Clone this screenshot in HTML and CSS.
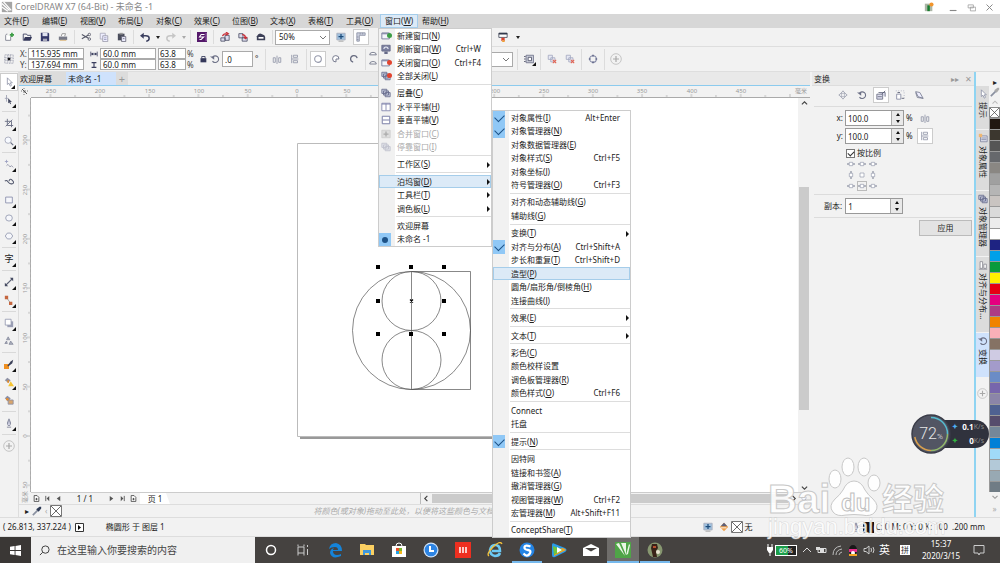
FILE: index.html
```html
<!DOCTYPE html>
<html lang="zh-CN">
<head>
<meta charset="utf-8">
<title>CorelDRAW X7 (64-Bit) - 未命名 -1</title>
<link rel="stylesheet" href="styles.css">
</head>
<body>
<svg class="defs" width="0" height="0" aria-hidden="true">
  <symbol id="new" viewBox="0 0 12 12"><path d="M2 4v6h6V5M4 2.500H3L2 4" fill="#fff" stroke="#777a88"/><path d="M7 3.500h5M9.500 1v5" stroke="#3c9d45" stroke-width="2"/></symbol>
  <symbol id="open" viewBox="0 0 12 12"><path d="M1.500 10V2.500h4l1 1.500h4v2" fill="none" stroke="#34385a"/><path d="M1.500 10.500 3.500 6H12l-2 4.500z" fill="#34385a"/></symbol>
  <symbol id="save" viewBox="0 0 12 12"><path d="M1 1h9l1 1v9H1z" fill="#34386a"/><path d="M3 1h6v4H3z" fill="#dfe2f0"/><path d="M3.500 8h5v3h-5z" fill="#aab"/></symbol>
  <symbol id="print" viewBox="0 0 12 12"><path d="M4 5l1-3h4L8 5" fill="#fff" stroke="#888"/><path d="M1 5.500h10v4H1z" fill="#777a88"/><path d="M2 10h8" stroke="#d8b070"/></symbol>
  <symbol id="cut" viewBox="0 0 12 12"><path d="M1 3l8 4.500M1 8l8-4.500" stroke="#555868" stroke-width="1.300"/><circle cx="10" cy="3" r="1.500" fill="none" stroke="#555868"/><circle cx="10" cy="8.500" r="1.500" fill="none" stroke="#555868"/></symbol>
  <symbol id="copy" viewBox="0 0 12 12"><path d="M1.500 1.500h6v7h-6z" fill="#eef" stroke="#aab"/><path d="M4.500 4.500h6v7h-6z" fill="#eef" stroke="#99a"/><path d="M6 7h3M6 9h3" stroke="#99b"/></symbol>
  <symbol id="paste" viewBox="0 0 12 12"><path d="M1 2h8v8H1z" fill="#4a4d5c"/><path d="M3 1h4v2H3z" fill="#999"/><path d="M5.500 5.500h5v6h-5z" fill="#eef" stroke="#667"/><path d="M7 8h2" stroke="#667"/></symbol>
  <symbol id="undo" viewBox="0 0 12 12"><path d="M3 4.500h4q4 0 4 3T7.500 11" fill="none" stroke="#3b3f5f" stroke-width="1.800"/><path d="M0 4.500 4.500 1v7z" fill="#3b3f5f"/></symbol>
  <symbol id="redo" viewBox="0 0 12 12"><path d="M9 4.500H5q-4 0-4 3T4.500 11" fill="none" stroke="#c6c6c6" stroke-width="1.800"/><path d="M12 4.500 7.500 1v7z" fill="#c6c6c6"/></symbol>
  <symbol id="launch" viewBox="0 0 12 12"><path d="M0 0h12v12H0z" fill="#54186a"/><path d="M9 3H5L3 6h5L5 9H3" fill="none" stroke="#fff" stroke-width="1.300"/><path d="M11 1v10" stroke="#b58cc4"/></symbol>
  <symbol id="import" viewBox="0 0 12 12"><path d="M1 7h5v4H1zM6 4h5v6H6z" fill="#dde" stroke="#4d5068"/><path d="M3 5q1-3 5-3M7 0l3 2-3 2" fill="none" stroke="#c9303a" stroke-width="1.500"/></symbol>
  <symbol id="export" viewBox="0 0 12 12"><path d="M5 7h6v4H5zM1 2h5v5H1z" fill="#dde" stroke="#4d5068"/><path d="M5 3q4 0 4 4M7 6l2 2 2-2" fill="none" stroke="#c9303a" stroke-width="1.500"/></symbol>
  <symbol id="pdf" viewBox="0 0 12 12"><path d="M1 5q2-4 5-3l4 2 1 2v4H1z" fill="#3d4058"/><path d="M3 6h6v2H3z" fill="#fff"/></symbol>
  <symbol id="screen" viewBox="0 0 12 12"><path d="M1 1.500h10v8H1z" fill="#9fc0de" stroke="#a9adbc"/><path d="M6 2.500v6M3 5.500h6" stroke="#1c4b7a" stroke-width="1.500"/><path d="M3 11h6" stroke="#999"/></symbol>
  <symbol id="refresh" viewBox="0 0 12 12"><path d="M1 1.500h10v7H1z" fill="#7c80a0" stroke="#666a88"/><path d="M3.500 6a2.500 2.500 0 1 1 5 0M2.500 10.500h7" fill="none" stroke="#e8eaf4" stroke-width="1.300"/><path d="M4 9h4v3H4z" fill="#666a88"/></symbol>
  <symbol id="rulers" viewBox="0 0 12 12"><path d="M1 11V1h10v3H4v7z" fill="#ccd1df" stroke="#8b90a3"/><path d="M5 1v2M8 1v2M1 6h2M1 9h2" stroke="#8b90a3"/></symbol>
  <symbol id="appmenu" viewBox="0 0 12 12"><path d="M1 1.500h10v5H1z" fill="#fff" stroke="#444a5c"/><path d="M1 1h10v2H1z" fill="#333a4c"/><path d="M4 7h4v4L6 10l-2 1z" fill="#d8432e"/><path d="M5 10h3v2H5z" fill="#f0a030"/></symbol>
  <symbol id="origin" viewBox="0 0 12 12"><path d="M1 1h10v10H1zM1 4.500h10M1 7.500h10M4.500 1v10M7.500 1v10" fill="none" stroke="#7e8298" stroke-dasharray="1 1"/><path d="M4.500 4.500h3v3h-3z" fill="#111"/></symbol>
  <symbol id="lock" viewBox="0 0 12 12"><path d="M3 5h7v5H3z" fill="#34385a"/><path d="M4.500 5V3h4v2" fill="none" stroke="#34385a"/></symbol>
  <symbol id="rotate" viewBox="0 0 12 12"><path d="M3 4a4 4 0 1 1 0 4.500" fill="none" stroke="#6c7086" stroke-width="1.300"/><path d="M0 3h5v4z" fill="#6c7086"/></symbol>
  <symbol id="mirh" viewBox="0 0 12 12"><path d="M1.500 4.500H4V10H1.500zM8 4.500h2.500V10H8zM6 2v10" fill="none" stroke="#9296a8"/></symbol>
  <symbol id="mirv" viewBox="0 0 12 12"><path d="M4 1.500h5V4H4zM4 8h5v2.500H4zM2 6h8M2 1v10" fill="none" stroke="#9296a8"/></symbol>
  <symbol id="circle" viewBox="0 0 12 12"><circle cx="6" cy="6" r="4" fill="#fff" stroke="#9498aa" stroke-width="1.300"/></symbol>
  <symbol id="pie" viewBox="0 0 12 12"><path d="M6 6v3.500A3.800 3.800 0 1 1 9.500 6z" fill="#fff" stroke="#787c90" stroke-width="1.200"/></symbol>
  <symbol id="arc" viewBox="0 0 12 12"><path d="M5 9.800A4 4 0 1 1 9.800 5" fill="none" stroke="#686c80" stroke-width="1.500"/></symbol>
  <symbol id="wrap" viewBox="0 0 12 12"><path d="M2.500 1.500h9v9h-9z" fill="#c9ccd8" stroke="#6d7088"/><path d="M5 4h4v4H5z" fill="#fff" stroke="#4d5068"/><path d="M0 3h2M0 6h2M0 9h2" stroke="#4d5068"/></symbol>
  <symbol id="layer" viewBox="0 0 12 12"><path d="M1.500 1.500h5v5h-5zM4.500 4.500h5v5h-5z" fill="#e6e8f3" stroke="#a5a9c0"/><path d="m7 7 4 4M11 7l-4 4" stroke="#e4614f" stroke-width="1.300"/></symbol>
  <symbol id="curve" viewBox="0 0 12 12"><circle cx="6" cy="6" r="4" fill="none" stroke="#868ba8" stroke-width="1.300"/><path d="M5 1h2v2H5zM5 9h2v2H5zM1 5h2v2H1zM9 5h2v2H9z" fill="#666b8c"/></symbol>
  <symbol id="plus" viewBox="0 0 12 12"><circle cx="6" cy="6" r="5.300" fill="none" stroke="#b9b9b9" stroke-width=".8"/><path d="M6 3v6M3 6h6" stroke="#a9a9a9" stroke-width="1.200"/></symbol>
  <symbol id="pick" viewBox="0 0 12 12"><path d="M4 1v8l2-1.500L7.500 11 9 10 7.500 7H10z" fill="#fff" stroke="#858aa0" stroke-width=".9"/></symbol>
  <symbol id="shape" viewBox="0 0 12 12"><path d="M3 0v8M1 4h4" stroke="#9a9eb0"/><path d="M5 4v6l1.500-1 1 2 1-.5-1-2h2z" fill="#454a62"/></symbol>
  <symbol id="crop" viewBox="0 0 12 12"><path d="M4 1v8h7M1 4h8v7M2 10 10 2" fill="none" stroke="#6a6f84" stroke-width="1.100"/></symbol>
  <symbol id="zoomt" viewBox="0 0 12 12"><circle cx="5" cy="5" r="3.800" fill="#f7faff" stroke="#a0a4b6"/><path d="m8 8 3 3" stroke="#6a6f84" stroke-width="1.500"/></symbol>
  <symbol id="free" viewBox="0 0 12 12"><path d="M1 3h4M3 1v4" stroke="#9a9fc0"/><path d="M3 8q2-3 3 0t3 0l2 2" fill="none" stroke="#8a8ea4"/></symbol>
  <symbol id="art" viewBox="0 0 12 12"><path d="M1 5q2-2 4 1t5 2 0-4-4 1" fill="none" stroke="#565b70" stroke-width="1.300"/></symbol>
  <symbol id="rect" viewBox="0 0 12 12"><path d="M2 2.500h8v7H2z" fill="#f6f7fb" stroke="#858aa8"/></symbol>
  <symbol id="ellipse" viewBox="0 0 12 12"><ellipse cx="6" cy="6" rx="4" ry="3.700" fill="#f6f7fb" stroke="#9297ae"/></symbol>
  <symbol id="poly" viewBox="0 0 12 12"><path d="m4 2.500h4L10.500 6 8 9.500H4L1.500 6z" fill="#f6f7fb" stroke="#9297ae"/></symbol>
  <symbol id="dim" viewBox="0 0 12 12"><path d="m2.500 9.500 7-7" stroke="#565b70" stroke-width="1.500"/><path d="M1 7l4 4H1zM11 5 7 1h4z" fill="#464b62"/></symbol>
  <symbol id="conn" viewBox="0 0 12 12"><path d="m3 3 5 7" fill="none" stroke="#999"/><path d="M1 1h4v4H1zM6 8h4v4H6z" fill="#c4663f"/></symbol>
  <symbol id="shadow" viewBox="0 0 12 12"><path d="M4 4h7v7H4z" fill="#9a9eb4"/><path d="M1.500 1.500h7v7h-7z" fill="#fff" stroke="#9297ae"/></symbol>
  <symbol id="transp" viewBox="0 0 12 12"><path d="m5 1 2 3.500H3zM3 6l1 3H1zM8 6l3 4H6z" fill="#a9adbc" stroke="#7c8094" stroke-width=".8"/></symbol>
  <symbol id="dropper" viewBox="0 0 12 12"><path d="M0 6h6v6H0z" fill="#f09020"/><path d="m4 8 4-5 3-2-1 4-5 4z" fill="#3b4058"/></symbol>
  <symbol id="eyedrop" viewBox="0 0 12 12"><path d="m1 11 6-6" stroke="#8a90a0" stroke-width="2"/><path d="m5 4 3 3 3-4 0-2H9z" fill="currentColor"/></symbol>
  <symbol id="fill" viewBox="0 0 12 12"><path d="m4 1 4 3-3 3-4-3z" fill="#8d91a4"/><path d="M4 4h2v3H4z" fill="#e88c28"/><path d="m8 5 4 6H5z" fill="#f5c330"/></symbol>
  <symbol id="bucket" viewBox="0 0 12 12"><path d="m6 1 5 5-5 5-5-5z" fill="#f0a04a"/><path d="m6 1 4 4H2z" fill="#5b607c"/><path d="M2 7h7" stroke="#fff"/></symbol>
  <symbol id="smart" viewBox="0 0 12 12"><path d="m4 1 4 3-3 4-4-4z" fill="#8a8ea4"/><path d="M5 6h6v5H5z" fill="#d9a56b" stroke="#8a8ea4"/><circle cx="4" cy="5" r="1.500" fill="#e88c28"/></symbol>
  <symbol id="props" viewBox="0 0 12 12"><path d="M3 3.500h8v7H3z" fill="#dfe2ee" stroke="#8287a0"/><path d="M4 6h6M4 8h6" stroke="#8287a0"/><path d="M1 1h4v4H1z" fill="#efb873"/></symbol>
  <symbol id="align" viewBox="0 0 12 12"><path d="M1 11h10M2.500 2h3v8h-3zM7 5h3v5H7z" fill="#fff" stroke="#8a8a94"/></symbol>
  <symbol id="pen" viewBox="0 0 12 12"><path d="M6 1 4 6l1 3h2l1-3zM3.500 11h5M6 3v4" fill="#eef" stroke="#777c92"/></symbol>
  <symbol id="win" viewBox="0 0 12 12"><path d="M1 2.500h9v7H1z" fill="#f3f4fb" stroke="#6c7090"/><path d="M1 2h9v2H1z" fill="#8c90ac"/></symbol>
  <symbol id="stack" viewBox="0 0 12 12"><path d="M1 1.500h6v5H1zM3 3.500h6v5H3zM5 5.500h6v5H5z" fill="#c8cce0" stroke="#656a8a"/></symbol>
  <symbol id="tileh" viewBox="0 0 12 12"><path d="M1 1.500h10v9H1zM6 2v8" fill="#fff" stroke="#7c80a8"/><path d="M1 2.500h10" stroke="#7c80a8"/></symbol>
  <symbol id="tilev" viewBox="0 0 12 12"><path d="M1.500 1.500h9v9h-9zM2 6h8" fill="#fff" stroke="#7c80a8" stroke-width="1.200"/></symbol>
  <symbol id="merge" viewBox="0 0 12 12"><path d="M1 1.500h10v9H1z" fill="#ddd" stroke="#ccc"/><path d="M6 3v6M3 6h6" stroke="#aaa" stroke-width="1.500"/></symbol>
  <symbol id="move" viewBox="0 0 12 12"><path d="M6 1 8 3.500H7V5h1.500V4L11 6 8.500 8V7H7v1.500h1L6 11 4 8.500h1V7H3.500v1L1 6l2.500-2v1H5V3.500H4z" fill="#fff" stroke="#85899c" stroke-width=".8"/></symbol>
  <symbol id="scale" viewBox="0 0 12 12"><path d="M1 5h7v6H1zM3 3h8v5M2 8h5" fill="#dde" stroke="#666b80"/><path d="m7 5 4-4" stroke="#555a70"/></symbol>
  <symbol id="size" viewBox="0 0 12 12"><path d="M2 5h5v6H2z" fill="#fff" stroke="#8287a0"/><path d="M1 1h10v10" fill="none" stroke="#a0a4b8" stroke-dasharray="1 2"/><path d="M8 10h3M3 3h3" stroke="#555a70"/></symbol>
  <symbol id="skew" viewBox="0 0 12 12"><path d="m2 2 5 1 4 7-6-2z" fill="#eef" stroke="#777c90"/><path d="m2 3 2 6 7 1" fill="none" stroke="#777c90"/></symbol>
  <symbol id="anchor" viewBox="0 0 12 12"><path d="M3.500 3.500h5v5h-5z" fill="#fff" stroke="#9397aa"/><path d="M0 6h3M9 6h3" stroke="#777c90" stroke-width="1.500"/></symbol>
  <symbol id="anchorv" viewBox="0 0 12 12"><path d="M3.500 3.500h5v5h-5z" fill="#fff" stroke="#9397aa"/><path d="M6 0v3M6 9v3" stroke="#777c90" stroke-width="1.500"/></symbol>
  <symbol id="anchorc" viewBox="0 0 12 12"><path d="M3 3h6v6H3z" fill="#fff" stroke="#9397aa"/></symbol>
  <symbol id="nocolor" viewBox="0 0 12 12"><path d="M.5.500h11v11H.5z" fill="#fff" stroke="#777"/><path d="m1 1 10 10M11 1 1 11" stroke="#444" stroke-width=".8"/></symbol>
  <symbol id="page" viewBox="0 0 12 12"><path d="M2 1h5l3 3v7H2z" fill="#fff" stroke="#333" stroke-width="1.300"/><path d="M4 7h4M6 5v4" stroke="#333" stroke-width="1.300"/></symbol>
</svg>

<div class="app">
  <header class="titlebar">
    <svg class="logo" viewBox="0 0 14 14"><path d="M1 1h12v12H1z" fill="#a5a5a5"/><path d="m1 3 9 8M1 7l7 5M3 1l9 10" stroke="#fff" stroke-width="1.500"/></svg>
    <h1>CorelDRAW X7 (64-Bit) - 未命名 -1</h1>
    <svg class="user" viewBox="0 0 12 12"><path d="M1 2h9v9H1z" fill="#aab5a5"/><path d="M4 4h3v7H4z" fill="#187c2e"/><circle cx="9" cy="3" r="2.500" fill="#f2952c"/></svg>
    <button class="winbtn" aria-label="最小化"><svg viewBox="0 0 12 12"><path d="M1 10h9" stroke="#888" stroke-width="1.500"/></svg></button>
    <button class="winbtn" aria-label="还原"><svg viewBox="0 0 12 12"><path d="M1.500 2.500h7v4h-7zM4.500 5.500h7v5h-7z" fill="#fff" stroke="#999"/></svg></button>
    <button class="winbtn" aria-label="关闭"><svg viewBox="0 0 12 12"><path d="m2 2 8 8M10 2l-8 8" stroke="#888" stroke-width="1.300"/></svg></button>
  </header>

  <nav class="menubar">
    <button>文件(<u>F</u>)</button><button>编辑(<u>E</u>)</button><button>视图(<u>V</u>)</button><button>布局(<u>L</u>)</button><button>对象(<u>C</u>)</button><button>效果(<u>C</u>)</button><button>位图(<u>B</u>)</button><button>文本(<u>X</u>)</button><button>表格(<u>T</u>)</button><button>工具(<u>O</u>)</button><button class="open">窗口(<u>W</u>)</button><button>帮助(<u>H</u>)</button>
  </nav>

  <div class="toolbar">
    <button class="tb" aria-label="新建"><svg><use href="#new"/></svg></button>
    <button class="tb" aria-label="打开"><svg><use href="#open"/></svg></button>
    <button class="tb" aria-label="保存"><svg><use href="#save"/></svg></button>
    <button class="tb" aria-label="打印"><svg><use href="#print"/></svg></button>
    <i class="sep"></i>
    <button class="tb" aria-label="剪切"><svg><use href="#cut"/></svg></button>
    <button class="tb" aria-label="复制"><svg><use href="#copy"/></svg></button>
    <button class="tb" aria-label="粘贴"><svg><use href="#paste"/></svg></button>
    <i class="sep"></i>
    <button class="tb" aria-label="撤消"><svg><use href="#undo"/></svg></button>
    <button class="drop" aria-label="撤消列表"></button>
    <button class="tb" aria-label="重做"><svg><use href="#redo"/></svg></button>
    <button class="drop dim" aria-label="重做列表"></button>
    <i class="sep"></i>
    <button class="tb" aria-label="搜索内容"><svg><use href="#launch"/></svg></button>
    <i class="sep"></i>
    <button class="tb" aria-label="导入"><svg><use href="#import"/></svg></button>
    <button class="tb" aria-label="导出"><svg><use href="#export"/></svg></button>
    <button class="tb" aria-label="发布为 PDF"><svg><use href="#pdf"/></svg></button>
    <i class="sep"></i>
    <select class="zoom" aria-label="缩放级别"><option>50%</option></select>
    <button class="tb wide" aria-label="全屏预览"><svg><use href="#screen"/></svg></button>
    <button class="tb on" aria-label="显示标尺"><svg><use href="#rulers"/></svg></button>
    <span class="covered"></span>
    <i class="sep"></i>
    <button class="tb wide" aria-label="应用程序启动器"><svg><use href="#appmenu"/></svg></button>
    <button class="drop" aria-label="启动器列表"></button>
  </div>

  <div class="propbar">
    <button class="tb" aria-label="对象原点"><svg><use href="#origin"/></svg></button>
    <div class="pair">
      <label for="px">X:</label><input id="px" value="115.935 mm">
      <label for="py">Y:</label><input id="py" value="137.694 mm">
    </div>
    <div class="pair size">
      <label for="pw"><svg viewBox="0 0 10 8"><path d="M1 1v6M9 1v6M2 4h6" stroke="#3b3f5f"/><path d="M1 4l3-2v4zM9 4 6 2v4z" fill="#3b3f5f"/></svg></label><input id="pw" aria-label="宽度" value="60.0 mm">
      <label for="ph"><svg viewBox="0 0 10 8"><path d="M2 1h6M2 7h6M5 1v6" stroke="#3b3f5f" stroke-width="1.400"/></svg></label><input id="ph" aria-label="高度" value="60.0 mm">
    </div>
    <div class="pair pct">
      <input id="sx" aria-label="水平缩放" value="63.8"><label for="sx">%</label>
      <input id="sy" aria-label="垂直缩放" value="63.8"><label for="sy">%</label>
    </div>
    <button class="tb narrow" aria-label="锁定比率"><svg><use href="#lock"/></svg></button>
    <svg><use href="#rotate"/></svg>
    <input class="angle" aria-label="旋转角度" value=".0"><span>°</span>
    <i class="sep"></i>
    <button class="tb" aria-label="水平镜像"><svg><use href="#mirh"/></svg></button>
    <button class="tb" aria-label="垂直镜像"><svg><use href="#mirv"/></svg></button>
    <i class="sep"></i>
    <button class="tb on" aria-label="椭圆形"><svg><use href="#circle"/></svg></button>
    <button class="tb" aria-label="饼图"><svg><use href="#pie"/></svg></button>
    <button class="tb" aria-label="弧"><svg><use href="#arc"/></svg></button>
    <i class="sep"></i>
    <svg class="arcs" viewBox="0 0 12 22"><path d="M2 6a4 3 0 0 1 8 0zM2 17a4 3 0 0 1 8 0z" fill="#fff" stroke="#686c80"/></svg>
    <select class="outline" aria-label="轮廓宽度"><option></option></select>
    <i class="sep"></i>
    <button class="tb fly" aria-label="文本换行"><svg><use href="#wrap"/></svg></button>
    <i class="sep"></i>
    <button class="tb" aria-label="到图层前面"><svg><use href="#layer"/></svg></button>
    <button class="tb" aria-label="到图层后面"><svg><use href="#layer"/></svg></button>
    <i class="sep"></i>
    <button class="tb" aria-label="转换为曲线"><svg><use href="#curve"/></svg></button>
    <i class="sep"></i>
    <button class="tb big" aria-label="快速自定义"><svg><use href="#plus"/></svg></button>
  </div>

  <main class="work">
    <aside class="toolbox">
      <button class="fly sel" aria-label="选择"><svg><use href="#pick"/></svg></button>
      <button class="fly" aria-label="形状"><svg><use href="#shape"/></svg></button>
      <hr>
      <button class="fly" aria-label="裁剪"><svg><use href="#crop"/></svg></button>
      <button class="fly" aria-label="缩放"><svg><use href="#zoomt"/></svg></button>
      <hr>
      <button class="fly" aria-label="手绘"><svg><use href="#free"/></svg></button>
      <button aria-label="艺术笔"><svg><use href="#art"/></svg></button>
      <button class="fly" aria-label="矩形"><svg><use href="#rect"/></svg></button>
      <button class="fly" aria-label="椭圆形"><svg><use href="#ellipse"/></svg></button>
      <button class="fly" aria-label="多边形"><svg><use href="#poly"/></svg></button>
      <hr>
      <button class="fly">字</button>
      <hr>
      <button class="fly" aria-label="平行度量"><svg><use href="#dim"/></svg></button>
      <button class="fly" aria-label="连接器"><svg><use href="#conn"/></svg></button>
      <hr>
      <button class="fly" aria-label="阴影"><svg><use href="#shadow"/></svg></button>
      <button aria-label="透明度"><svg><use href="#transp"/></svg></button>
      <hr>
      <button class="fly" aria-label="颜色滴管"><svg><use href="#dropper"/></svg></button>
      <button class="fly" aria-label="交互式填充"><svg><use href="#fill"/></svg></button>
      <button aria-label="智能填充"><svg><use href="#smart"/></svg></button>
      <hr>
      <button class="fly" aria-label="轮廓笔"><svg><use href="#pen"/></svg></button>
      <hr>
      <button class="big" aria-label="快速自定义"><svg><use href="#plus"/></svg></button>
    </aside>

    <section class="doc">
      <div class="tabs">
        <button>欢迎屏幕</button><button class="current">未命名 -1</button><button class="add">+</button>
      </div>
      <div class="view">
        <svg class="corner" viewBox="0 0 12 12"><path d="M5 2v8M2 5h8" stroke="#777" stroke-dasharray="1 1"/><path d="m3 3 5 5" stroke="#555"/></svg>
        <svg class="ruler top">
          <defs><pattern id="th" width="49.300" height="12" patternUnits="userSpaceOnUse" x="266"><path d="M0 8v4M4.900 11v1M9.900 11v1M14.800 11v1M19.700 11v1M24.600 9v3M29.600 11v1M34.500 11v1M39.400 11v1M44.400 11v1M49.300 8v4" stroke="#bbb"/></pattern></defs>
          <rect width="100%" height="12" fill="url(#th)"/>
          <g class="nums"><text x="20" y="7">250</text><text x="69" y="7">200</text><text x="119" y="7">150</text><text x="168" y="7">100</text><text x="217" y="7">50</text><text x="266" y="7">0</text><text x="316" y="7">50</text><text x="365" y="7">100</text><text x="414" y="7">150</text><text x="464" y="7">200</text><text x="513" y="7">250</text><text x="562" y="7">300</text><text x="611" y="7">350</text><text x="661" y="7">400</text><text x="710" y="7">450</text><text x="770" y="7">毫米</text></g>
        </svg>
        <svg class="ruler left">
          <defs><pattern id="tv" width="12" height="49.300" patternUnits="userSpaceOnUse" y="338"><path d="M8 0h4M11 4.900h1M11 9.900h1M11 14.800h1M11 19.700h1M9 24.600h3M11 29.600h1M11 34.500h1M11 39.400h1M11 44.400h1M8 49.300h4" stroke="#bbb"/></pattern></defs>
          <rect width="12" height="100%" fill="url(#tv)"/>
          <g class="nums"><text transform="translate(8 42) rotate(-90)">300</text><text transform="translate(8 92) rotate(-90)">250</text><text transform="translate(8 141) rotate(-90)">200</text><text transform="translate(8 190) rotate(-90)">150</text><text transform="translate(8 240) rotate(-90)">100</text><text transform="translate(8 289) rotate(-90)">50</text><text transform="translate(8 338) rotate(-90)">0</text><text transform="translate(8 387) rotate(-90)">50</text><text transform="translate(8 399) rotate(-90)">毫米</text></g>
        </svg>
        <svg class="canvas" role="img" aria-label="绘图页面">
          <g transform="translate(266 338)" fill="none">
            <path d="M3 1.500h207V-289" stroke="#999" stroke-width="3"/>
            <path d="M.5-292.500h207V.500H.5z" fill="#fff" stroke="#bbb"/>
            <g stroke="#555" stroke-width=".7">
              <circle cx="114.500" cy="-105.500" r="59"/>
              <circle cx="114.500" cy="-135" r="29.500"/>
              <circle cx="114.500" cy="-76" r="29.500"/>
              <path d="M114.500-164.500h59v118h-59z"/>
            </g>
            <path d="M79-171h4v4h-4zM112-171h4v4h-4zM145-171h4v4h-4zM79-137h4v4h-4zM145-137h4v4h-4zM79-104h4v4h-4zM112-104h4v4h-4zM145-104h4v4h-4z" fill="#000"/>
            <path d="m113-136.500 3 3M116-136.500l-3 3" stroke="#000" stroke-width="1.200"/>
          </g>
        </svg>
        <div class="vscroll"><button aria-label="向上"><svg viewBox="0 0 8 8"><path d="m1 5 3-3 3 3" fill="none" stroke="#444" stroke-width="1.300"/></svg></button><i></i><button aria-label="向下"><svg viewBox="0 0 8 8"><path d="m1 3 3 3 3-3" fill="none" stroke="#444" stroke-width="1.300"/></svg></button></div>
      </div>
      <div class="pages">
        <button class="pg" aria-label="添加页面"><svg><use href="#page"/></svg></button>
        <button class="pg" aria-label="第一页"><svg viewBox="0 0 8 8"><path d="M2 1v6" stroke="#555"/><path d="M6 1v6L3 4z" fill="#555"/></svg></button>
        <button class="pg" aria-label="上一页"><svg viewBox="0 0 8 8"><path d="M6 1v6L2 4z" fill="#555"/></svg></button>
        <span class="count">1 / 1</span>
        <button class="pg" aria-label="下一页"><svg viewBox="0 0 8 8"><path d="M2 1v6l4-3z" fill="#555"/></svg></button>
        <button class="pg" aria-label="最后一页"><svg viewBox="0 0 8 8"><path d="M6 1v6" stroke="#555"/><path d="M2 1v6l3-3z" fill="#555"/></svg></button>
        <button class="pg" aria-label="在后面添加页面"><svg><use href="#page"/></svg></button>
        <button class="pagetab">页 1</button>
        <div class="hscroll"><button aria-label="向左"><svg viewBox="0 0 8 8"><path d="M5 1 2 4l3 3" fill="none" stroke="#444" stroke-width="1.300"/></svg></button><i></i><button aria-label="向右"><svg viewBox="0 0 8 8"><path d="m3 1 3 3-3 3" fill="none" stroke="#444" stroke-width="1.300"/></svg></button><button aria-label="导航器"><svg><use href="#zoomt"/></svg></button></div>
      </div>
      <div class="docpal">
        <span>▸</span><svg><use href="#eyedrop"/></svg><span class="faint">‹</span><svg><use href="#nocolor"/></svg>
        <em>将颜色(或对象)拖动至此处，以便将这些颜色与文档存储在一起</em>
      </div>
    </section>

    <section class="docker">
      <header><h2>变换</h2><span>▸▸</span><span>✕</span></header>
      <div class="modes">
        <button class="tb" aria-label="位置"><svg><use href="#move"/></svg></button>
        <button class="tb" aria-label="旋转"><svg><use href="#rotate"/></svg></button>
        <button class="tb on" aria-label="缩放和镜像"><svg><use href="#scale"/></svg></button>
        <button class="tb" aria-label="大小"><svg><use href="#size"/></svg></button>
        <button class="tb" aria-label="倾斜"><svg><use href="#skew"/></svg></button>
      </div>
      <div class="fields">
        <label for="tx">x:</label><span class="spin"><input id="tx" value="100.0"><b></b><b></b></span><span>%</span><button class="tb" aria-label="水平镜像"><svg><use href="#mirh"/></svg></button>
        <label for="ty">y:</label><span class="spin"><input id="ty" value="100.0"><b></b><b></b></span><span>%</span><button class="tb on" aria-label="垂直镜像"><svg><use href="#mirv"/></svg></button>
      </div>
      <label class="check"><input type="checkbox" checked>按比例</label>
      <div class="anchors">
        <svg><use href="#anchor"/></svg><svg><use href="#anchor"/></svg><svg><use href="#anchor"/></svg>
        <svg><use href="#anchorv"/></svg><svg><use href="#anchorc"/></svg><svg><use href="#anchorv"/></svg>
        <svg><use href="#anchor"/></svg><svg class="picked"><use href="#anchor"/></svg><svg><use href="#anchor"/></svg>
      </div>
      <div class="copies"><label for="cp">副本:</label><span class="spin"><input id="cp" value="1"><b></b><b></b></span></div>
      <button class="apply">应用</button>
    </section>

    <nav class="strip">
      <button><svg><use href="#pick"/></svg>提示</button>
      <button><svg><use href="#props"/></svg>对象属性</button>
      <button><svg><use href="#stack"/></svg>对象管理器</button>
      <button><svg><use href="#align"/></svg>对齐与分布...</button>
      <button class="current"><svg><use href="#rotate"/></svg>变换</button>
      <svg class="more"><use href="#plus"/></svg>
    </nav>

    <aside class="palette">
      <span>▸</span><svg class="faint"><use href="#eyedrop"/></svg>
      <svg class="faint" viewBox="0 0 12 12"><path d="m3 8 3-3 3 3" fill="none" stroke="#bbb" stroke-width="1.300"/></svg>
      <svg class="none"><use href="#nocolor"/></svg>
      <div class="swatches" id="swatches"></div>
      <svg class="chev" viewBox="0 0 12 12"><path d="m3 4 3 3 3-3" fill="none" stroke="#999" stroke-width="1.300"/></svg>
      <span class="faint">»</span>
    </aside>
  </main>

  <footer class="status">
    <span class="pos">( 26.813, 337.224 )</span>
    <svg class="play" viewBox="0 0 9 9"><path d="M.5.500h8v8h-8z" fill="#fff" stroke="#333"/><path d="M3 2v5l3-2.500z"/></svg>
    <span class="obj">椭圆形 于 图层 1</span>
    <span class="marks"><svg><use href="#screen"/></svg><svg><use href="#bucket"/></svg><svg class="nofill"><use href="#nocolor"/></svg>无</span>
    <span class="pen"><svg><use href="#pen"/></svg><i></i>C: 0 M: 0 Y: 0 K: 100 &nbsp;.200 mm</span>
  </footer>

  <div class="taskbar">
    <button class="start" aria-label="开始"><svg viewBox="0 0 12 12"><path d="m0 2 5-1v4.500H0zM6 1l6-1v5.500H6zM0 6.500h5V11l-5-1zM6 6.500h6V12l-6-1z" fill="#fff"/></svg></button>
    <label class="search"><svg viewBox="0 0 12 12"><circle cx="7" cy="5" r="4" fill="none" stroke="#333"/><path d="M4 8 1 11" stroke="#333"/></svg><input aria-label="搜索" placeholder="在这里输入你要搜索的内容"></label>
    <div class="apps">
      <button aria-label="Cortana"><svg viewBox="0 0 16 16"><circle cx="8" cy="8" r="4.500" fill="none" stroke="#fff" stroke-width="1.500"/></svg></button>
      <button aria-label="任务视图"><svg viewBox="0 0 16 16"><path d="M3 5h6v6H3zM3 2.500v2M9 2.500v2M3 11v2.500M9 11v2.500M12.500 3v2M12.500 7v6" fill="none" stroke="#ccc"/></svg></button>
      <button aria-label="Edge"><svg viewBox="0 0 16 16"><path d="M2 7q1-6 7-6 6 1 6 8H6q0 4 4 4 2 0 4-1v2q-9 4-11-3 0-4 4-5-1 1-1 2h5q0-3-3-3-4 0-6 2z" fill="#1583d8"/></svg></button>
      <button aria-label="文件资源管理器"><svg viewBox="0 0 16 16"><path d="M1 2h5l1 1h8v10H1z" fill="#fbd062"/><path d="M4 13V8h8v5h-2v-2H6v2z" fill="#3f97db"/></svg></button>
      <button aria-label="应用商店"><svg viewBox="0 0 16 16"><path d="M1 4h14v11H1z" fill="#fff"/><path d="M5 4q0-3 3-3t3 3" fill="none" stroke="#fff"/><path d="M5 6h3v3H5z" fill="#e8502d"/><path d="M8 6h3v3H8z" fill="#7bb72c"/><path d="M5 9h3v3H5z" fill="#23a4e8"/><path d="M8 9h3v3H8z" fill="#f5b81e"/></svg></button>
      <button aria-label="时钟"><svg viewBox="0 0 16 16"><circle cx="8" cy="8" r="7.500" fill="#cfe2f8"/><circle cx="8" cy="8" r="6.300" fill="#2d84e3"/><path d="M7 4v5h4" fill="none" stroke="#fff" stroke-width="2"/></svg></button>
      <button aria-label="阅读"><svg viewBox="0 0 16 16"><path d="M0 0h16v16H0z" fill="#ed2f20"/><path d="M5 5v6M8 5v6M11 5v6" stroke="#fff" stroke-width="1.500"/></svg></button>
      <button aria-label="Internet Explorer"><svg viewBox="0 0 16 16"><path d="M13 11q-1 3-5 3-5-1-5-6 1-5 5-5 5 0 5 6H5" fill="none" stroke="#6ccaf5" stroke-width="2.500"/><path d="M2 14Q-1 12 6 5t9-3" fill="none" stroke="#f5c33a" stroke-width="1.300"/></svg></button>
      <button class="run" aria-label="搜狗"><svg viewBox="0 0 16 16"><circle cx="8" cy="8" r="7.500" fill="#2484e4"/><path d="M11.500 4.500Q6 2.500 5.500 5t3.500 3 1.500 4-6-.5" fill="none" stroke="#fff" stroke-width="2.300"/></svg></button>
      <button aria-label="腾讯视频"><svg viewBox="0 0 16 16"><path d="M1 3q0-3 3-1l10 4q3 2 0 4L4 15q-3 1-3-2z" fill="#2a9be8"/><path d="m3 14 12-6-3-2-9 2z" fill="#f7a020"/><path d="m2 4 10 4-9 5z" fill="#6fc53b"/><path d="m6 5 5 3-5 3z" fill="#fff"/></svg></button>
      <button aria-label="邮件"><svg viewBox="0 0 16 16"><path d="m0 6 8-4 8 4v8H0z" fill="#fff"/><path d="M2 6h12L8 9.500z" fill="#454240"/></svg></button>
      <button class="run active" aria-label="CorelDRAW"><svg viewBox="0 0 16 16"><path d="M0 0h16v16H0z" fill="#4fa447"/><path d="m1 2 9 12L4 1zM6 1l5 12V1zM14 2l-3 11 2-1 2-9z" fill="#e9f5e4"/></svg></button>
      <button class="run" aria-label="图片查看"><svg viewBox="0 0 16 16"><circle cx="8" cy="8" r="7.500" fill="#879770"/><path d="M5 2h5l1 4-2 3 1 6H6L4 6z" fill="#3a2218"/><circle cx="11" cy="10" r="2" fill="#e8e2cf"/><path d="M6 4h3v2H6z" fill="#b7502e"/></svg></button>
    </div>
    <div class="tray">
      <svg class="plug" viewBox="0 0 8 12"><path d="M2 0v3M6 0v3M4 8v4" stroke="#fff"/><path d="M1 3h6v3L5 9H3L1 6z" fill="#fff"/></svg>
      <span class="batt">60%</span>
      <svg viewBox="0 0 12 12"><path d="m2 8 4-4 4 4" fill="none" stroke="#ddd"/></svg>
      <svg viewBox="0 0 12 12"><path d="M3 4.500h8v4H3z" fill="none" stroke="#ddd"/><path d="M1 3h4v3H1zM5 5h4v3H5z" fill="#ddd"/></svg>
      <svg viewBox="0 0 12 12"><path d="M2 11Q2 3 10 2M5 11q0-5 6-6M8 11q0-2 3-3" fill="none" stroke="#bbb"/></svg>
      <svg viewBox="0 0 12 12"><ellipse cx="6" cy="6" rx="4" ry="5" fill="#181818"/><path d="M2 5h8v3H2z" fill="#e72b8b"/><ellipse cx="6" cy="9" rx="2" ry="2" fill="#fff"/><path d="M2 11h8" stroke="#f5a623" stroke-width="2"/></svg>
      <svg viewBox="0 0 12 12"><path d="M1 4.500h2L6 2v8L3 7.500H1zM8 4q1 2 0 4M10 3q2 3 0 6" fill="none" stroke="#ccc"/></svg>
      <span class="ime">英</span><span class="pin">拼</span>
      <time>15:37<br>2020/3/15</time>
      <svg class="note" viewBox="0 0 12 12"><path d="M1 1.500h10v7.500H7L6 11 5 9H1z" fill="none" stroke="#ccc"/></svg>
    </div>
  </div>

  <ul class="menu window-menu">
    <li><button><svg><use href="#win"/></svg><span>新建窗口(<u>N</u>)</span></button><i class="dot green"></i></li>
    <li><button><svg><use href="#refresh"/></svg><span>刷新窗口(<u>W</u>)</span><kbd>Ctrl+W</kbd></button></li>
    <li><button><svg><use href="#win"/></svg><span>关闭窗口(<u>O</u>)</span><kbd>Ctrl+F4</kbd></button><i class="dot red"></i></li>
    <li><button><svg><use href="#stack"/></svg><span>全部关闭(<u>L</u>)</span></button><i class="dot red"></i></li>
    <li class="line"></li>
    <li><button><svg><use href="#stack"/></svg><span>层叠(<u>C</u>)</span></button></li>
    <li><button><svg><use href="#tileh"/></svg><span>水平平铺(<u>H</u>)</span></button></li>
    <li><button><svg><use href="#tilev"/></svg><span>垂直平铺(<u>V</u>)</span></button></li>
    <li><button disabled><svg><use href="#merge"/></svg><span>合并窗口(<u>C</u>)</span></button></li>
    <li><button disabled><svg class="pale"><use href="#stack"/></svg><span>停靠窗口(<u>I</u>)</span></button></li>
    <li class="line"></li>
    <li class="sub"><button><span>工作区(<u>S</u>)</span></button></li>
    <li class="line"></li>
    <li class="sub hot"><button><span>泊坞窗(<u>D</u>)</span></button></li>
    <li class="sub"><button><span>工具栏(<u>T</u>)</span></button></li>
    <li class="sub"><button><span>调色板(<u>L</u>)</span></button></li>
    <li class="line"></li>
    <li><button><span>欢迎屏幕</span></button></li>
    <li class="radio"><button><span>未命名 -1</span></button></li>
  </ul>

  <ul class="menu docker-menu">
    <li class="ck"><button><span>对象属性(<u>I</u>)</span><kbd>Alt+Enter</kbd></button></li>
    <li class="ck"><button><span>对象管理器(<u>N</u>)</span></button></li>
    <li><button><span>对象数据管理器(<u>E</u>)</span></button></li>
    <li><button><span>对象样式(<u>S</u>)</span><kbd>Ctrl+F5</kbd></button></li>
    <li><button><span>对象坐标(<u>J</u>)</span></button></li>
    <li><button><span>符号管理器(<u>O</u>)</span><kbd>Ctrl+F3</kbd></button></li>
    <li class="line"></li>
    <li><button><span>对齐和动态辅助线(<u>G</u>)</span></button></li>
    <li><button><span>辅助线(<u>G</u>)</span></button></li>
    <li class="line"></li>
    <li class="sub"><button><span>变换(<u>T</u>)</span></button></li>
    <li class="ck"><button><span>对齐与分布(<u>A</u>)</span><kbd>Ctrl+Shift+A</kbd></button></li>
    <li><button><span>步长和重复(<u>T</u>)</span><kbd>Ctrl+Shift+D</kbd></button></li>
    <li class="hot"><button><span>造型(<u>P</u>)</span></button></li>
    <li><button><span>圆角/扇形角/倒棱角(<u>H</u>)</span></button></li>
    <li><button><span>连接曲线(<u>J</u>)</span></button></li>
    <li class="line"></li>
    <li class="sub"><button><span>效果(<u>E</u>)</span></button></li>
    <li class="line"></li>
    <li class="sub"><button><span>文本(<u>T</u>)</span></button></li>
    <li class="line"></li>
    <li><button><span>彩色(<u>C</u>)</span></button></li>
    <li><button><span>颜色校样设置</span></button></li>
    <li><button><span>调色板管理器(<u>R</u>)</span></button></li>
    <li><button><span>颜色样式(<u>O</u>)</span><kbd>Ctrl+F6</kbd></button></li>
    <li class="line"></li>
    <li><button><span>Connect</span></button></li>
    <li><button><span>托盘</span></button></li>
    <li class="line"></li>
    <li class="ck"><button><span>提示(<u>N</u>)</span></button></li>
    <li class="line"></li>
    <li><button><span>因特网</span></button></li>
    <li><button><span>链接和书签(<u>A</u>)</span></button></li>
    <li><button><span>撤消管理器(<u>G</u>)</span></button></li>
    <li><button><span>视图管理器(<u>W</u>)</span><kbd>Ctrl+F2</kbd></button></li>
    <li><button><span>宏管理器(<u>M</u>)</span><kbd>Alt+Shift+F11</kbd></button></li>
    <li class="line"></li>
    <li><button><span>ConceptShare(<u>T</u>)</span></button></li>
  </ul>

  <svg class="brand" viewBox="0 0 190 90" aria-label="Baidu 经验">
    <g class="outlined">
      <text class="b1" x="2" y="63">Bai</text>
      <ellipse cx="82" cy="17" rx="6" ry="9"/><ellipse cx="98" cy="17" rx="6" ry="9"/><ellipse cx="69" cy="29" rx="6" ry="9"/><ellipse cx="108" cy="33" rx="6" ry="8"/>
      <path d="M88 31q7 0 11 9 3 5 8 9 7 7 2 13-4 5-13 3-8-1-16 0-9 2-13-3-5-6 2-13 5-4 8-9 4-9 11-9z"/>
      <text class="b3" x="116" y="60">经验</text>
    </g>
    <text class="b2" x="75" y="61">du</text>
    <text class="b4" x="2" y="84">jingyan.baidu.com</text>
  </svg>

  <div class="gadget">
    <div class="net"><span><i class="up">✦</i>0.1<small>K/s</small></span><span><i class="down">✦</i>0<small>K/s</small></span></div>
    <div class="dial"><svg viewBox="0 0 40 40"><circle cx="20" cy="20" r="19" fill="#525563" stroke="#3a3c48"/><path d="M20 3.500a16.500 16.500 0 0 1 16.500 16.500" stroke="#55bcd0"/><path d="M36.500 20A16.500 16.500 0 0 1 20 36.500" stroke="#93b96c"/><path d="M20 36.500A16.500 16.500 0 0 1 3.800 23" stroke="#d9a04e"/></svg><strong>72<small>%</small></strong></div>
  </div>
</div>
<script src="palette.js"></script>
</body>
</html>
```
FILE: styles.css
```css
* { box-sizing: border-box; }
body { margin: 0; }
body, button, input, select, kbd { font-family: "Noto Sans", "Noto Sans CJK SC", sans-serif; font-size: 8px; line-height: 12px; color: #222; }
button { border: 0; padding: 0; background: none; display: flex; align-items: center; justify-content: center; white-space: nowrap; flex: none; }
input { border: 1px solid #aaa; border-radius: 0; background: #fff; padding: 0 2px; min-width: 0; outline: 0; }
h1, h2, ul { margin: 0; padding: 0; font-weight: 400; font-size: 8px; }
svg { width: 10px; height: 10px; display: block; flex: none; }
.defs { position: absolute; }
.app { position: relative; height: 100vh; overflow: hidden; display: grid; grid-template-rows: 14px 14px 19px 25px minmax(0, 1fr) 20px 26px; background: #f2f2f2; }

.titlebar { background: #fff; display: flex; align-items: center; padding: 0 6px 0 1px; }
.titlebar .logo { width: 12px; height: 12px; margin-right: 2px; }
.titlebar h1 { flex: 1; color: #888; font-size: 9px; }
.titlebar .user { margin-right: 6px; }
.winbtn { margin-left: 9px; }
.winbtn svg { width: 9px; height: 9px; }

.menubar { background: #d7d7d7; display: grid; grid-template-columns: repeat(12, 38px); }
.menubar button { justify-content: flex-start; padding-left: 4px; }
.menubar .open { background: #dceaf7; border: 1px solid #a5cdea; }

.toolbar, .propbar { display: flex; align-items: center; border-bottom: 1px solid #dedede; }
.tb { width: 18px; height: 16px; }
.tb.wide { width: 22px; }
.tb.narrow { width: 15px; }
.on { background: #fff; border: 1px solid #ccc; width: 16px; margin: 0 1px; }
.big svg { width: 12px; height: 12px; }
.sep { width: 1px; height: 14px; margin: 0 2px; background: #dcdcdc; flex: none; }
.drop::before { content: ""; border: 2px solid transparent; border-top: 3px solid #222; border-bottom: 0; }
.drop { width: 8px; }
.drop.dim::before { border-top-color: #aaa; }
.zoom { width: 55px; height: 15px; }
.zoom, .outline { appearance: none; border: 1px solid #aaa; border-radius: 0; padding: 0 3px; background-color: #fff; background-repeat: no-repeat; background-image: linear-gradient(45deg, transparent 45%, #777 45%, #777 60%, transparent 60%), linear-gradient(-45deg, transparent 45%, #777 45%, #777 60%, transparent 60%); background-position: right 6px center, right 3px center; background-size: 3px 3px; }
.covered { width: 117px; }

.propbar .sep { height: 21px; }
.pair { display: grid; grid-template-columns: 8px 56px; grid-auto-rows: 11px; margin-left: 2px; align-items: center; }
.pair input { height: 11px; line-height: 9px; width: 100%; }
.pair.size { grid-template-columns: 10px 56px; margin-left: 6px; }
.pair.size svg { width: 8px; height: 8px; }
.pair.pct { grid-template-columns: 28px 8px; column-gap: 1px; margin-left: 2px; }
.pair.pct input { padding: 0 1px; }
.pair label { color: #444; }
.angle { width: 31px; height: 16px; margin: 0 2px; }
.propbar span + .sep { margin-left: 7px; }
.arcs { width: 10px; height: 22px; }
.outline { width: 133px; height: 15px; margin: 0 2px; }
.fly { position: relative; }
.fly::after { content: ""; position: absolute; right: 2px; bottom: 1px; border-left: 4px solid transparent; border-bottom: 4px solid #111; }

.work { display: grid; grid-template-columns: 19px minmax(0, 1fr) 164px 13px 11px; min-height: 0; overflow: hidden; }
.toolbox { padding-top: 1px; border-right: 1px solid #ddd; display: flex; flex-direction: column; }
.toolbox button { height: 18px; font-size: 9px; }
.toolbox .sel { background: #fff; border: 1px solid #ccc; }
.toolbox hr { width: 14px; height: 1px; border: 0; margin: 2px auto; background: #d9d9d9; flex: none; }

.doc { display: flex; flex-direction: column; min-width: 0; min-height: 0; padding-right: 2px; }
.tabs { display: flex; background: #e9e9e9; height: 14px; border-bottom: 1px solid #8ccbee; flex: none; }
.tabs button { background: #dcdcdc; width: 47px; justify-content: flex-start; padding-left: 1px; }
.tabs .current { background: #cfe2fc; width: 50px; padding-left: 2px; }
.tabs .add { width: 12px; padding: 0; justify-content: center; color: #999; font-size: 11px; }
.view { flex: 1; min-height: 0; display: grid; grid-template: 12px minmax(0, 1fr) / 12px minmax(0, 1fr) 12px; }
.corner { width: 12px; height: 12px; }
.ruler { width: 100%; height: 100%; }
.ruler.top { grid-column: 2 / 4; border-bottom: 1px solid #aaa; }
.ruler.left { border-right: 1px solid #aaa; overflow: visible; }
.nums text { font-size: 6px; fill: #999; text-anchor: middle; }
.canvas { width: 100%; height: 100%; background: #fff; }
.vscroll { background: #f2f2f2; display: flex; flex-direction: column; align-items: center; }
.vscroll i { width: 10px; flex: 1; margin: 79px 0 72px; background: #cbcbcb; }
.vscroll button, .hscroll button { width: 11px; height: 10px; }
.vscroll svg, .hscroll svg { width: 7px; height: 7px; }
.pages { height: 12px; flex: none; display: flex; align-items: center; margin-left: 12px; border-top: 1px solid #ccc; }
.pg { width: 11px; }
.pg svg { width: 7px; height: 7px; }
.count { width: 42px; text-align: center; }
.pagetab { background: #fff; width: 30px; height: 11px; margin-left: 1px; clip-path: polygon(0 0, 26px 0, 100% 100%, 0 100%); }
.hscroll { margin-left: auto; width: 390px; height: 11px; display: flex; align-items: center; border-left: 1px solid #bbb; }
.hscroll i { flex: 1; height: 9px; background: #cbcbcb; }
.docpal { height: 13px; flex: none; display: flex; align-items: center; gap: 3px; padding-left: 6px; border-top: 1px solid #ddd; }
.docpal em { color: #aaa; margin-left: 248px; white-space: nowrap; overflow: hidden; }
.docpal svg + span + svg { width: 12px; height: 12px; }
.docpal svg { color: #2d3a55; }
.faint { color: #aaa; }

.docker { border-right: 2px solid #8fd4f2; padding: 0 2px; }
.docker header { display: flex; gap: 6px; align-items: center; height: 14px; background: #e9e9e9; border-bottom: 1px solid #ddd; margin: 0 -2px; padding: 0 2px; }
.docker header span { color: #999; }
.docker h2 { flex: 1; color: #222; }
.modes { display: flex; gap: 1px; padding: 1px 0 3px 20px; height: 21px; border-bottom: 1px solid #dcdcdc; }
.fields { display: grid; grid-template-columns: 29px 59px 8px 18px; gap: 2px; padding: 3px 0; align-items: center; }
.fields label { text-align: right; }
.spin { display: grid; grid-template: 7px 7px / 1fr 11px; background: #e9e9e9; border: 1px solid #999; height: 16px; }
.spin input { grid-row: 1 / 3; border: 0; border-right: 1px solid #aaa; width: 100%; height: 14px; }
.spin b { place-self: center; border: 2px solid transparent; border-bottom: 3px solid #111; border-top: 0; }
.spin b + b { border-top: 3px solid #111; border-bottom: 0; }
.check { display: flex; align-items: center; gap: 2px; margin-left: 32px; height: 12px; }
.check input { appearance: none; width: 9px; height: 9px; margin: 0; padding: 0; border: 1px solid #777; display: grid; place-items: center; }
.check input::before { content: ""; width: 5px; height: 3px; border: solid #333; border-width: 0 0 1px 1px; transform: rotate(-45deg); }
.anchors { display: grid; grid-template-columns: repeat(3, 10px); grid-auto-rows: 10px; gap: 1px; padding-bottom: 3px; margin-left: 32px; }
.anchors svg { width: 8px; height: 8px; margin: 1px; }
.anchors svg.picked { width: 10px; height: 10px; margin: 0; border: 1px solid #bbb; }
.copies { display: flex; align-items: center; gap: 3px; border: solid #dcdcdc; border-width: 1px 0; height: 24px; padding-left: 10px; }
.copies .spin { width: 58px; }
.apply { width: 53px; height: 16px; margin: 2px 0 0 auto; background: #e3e3e3; border: 1px solid #bbb; }

.strip { padding-top: 14px; display: flex; flex-direction: column; align-items: center; }
.strip button { writing-mode: vertical-rl; text-orientation: sideways; background: #dcdcdc; width: 100%; justify-content: flex-start; gap: 3px; padding: 3px 0; margin-bottom: 1px; height: 60px; }
.strip button:first-child { height: 43px; }
.strip button:nth-child(3) { height: 65px; }
.strip button:nth-child(4) { height: 75px; }
.strip .current { background: #cfe2fc; height: 44px; }
.strip .more { width: 11px; height: 11px; margin-top: 10px; }

.palette { display: flex; flex-direction: column; align-items: center; padding: 4px 0 3px; }
.palette > span, .palette .chev { height: 11px; flex: none; line-height: 11px; }
.palette .none { width: 11px; height: 11px; }
.swatches { flex: 1; display: flex; flex-direction: column; width: 100%; }
.swatches i { flex: 1; border: solid #999; border-width: 1px 0 0 1px; }

.status { display: flex; align-items: center; border-top: 1px solid #ddd; border-bottom: 1px solid #ddd; padding: 0 15px 0 3px; white-space: nowrap; }
.play { width: 9px; height: 9px; margin-left: 4px; }
.obj { margin-left: 22px; flex: 1; }
.marks, .pen { display: flex; align-items: center; gap: 2px; }
.marks svg:first-child { margin-right: 4px; }
.marks .nofill { width: 12px; height: 12px; }
.marks { margin-right: 98px; }
.pen i { width: 11px; height: 11px; background: #17110e; }

.taskbar { background: #454240; display: flex; min-width: 0; }
.start { width: 31px; background: #3a3735; }
.start svg { width: 11px; height: 11px; }
.search { width: 224px; background: #f0f0f0; display: flex; align-items: center; padding-left: 8px; gap: 5px; flex: none; }
.search svg { width: 11px; height: 11px; }
.search input { border: 0; background: none; font-size: 10px; flex: 1; }
.search input::placeholder { color: #444; opacity: 1; }
.apps { display: flex; flex: 1; }
.apps button { width: 32px; border-bottom: 2px solid transparent; padding-top: 2px; }
.apps svg { width: 16px; height: 16px; }
.apps .run { border-image: linear-gradient(90deg, transparent 10%, #76b9ed 10%, #76b9ed 90%, transparent 90%) 2; }
.apps .active { background: #6f6d6b; border-image: none; border-bottom-color: #76b9ed; }
.tray { display: flex; align-items: center; gap: 4px; color: #fff; padding-right: 15px; }
.tray svg { width: 12px; height: 12px; }
.tray .plug { width: 8px; margin-right: -3px; }
.batt { width: 22px; height: 11px; line-height: 9px; border: 1px solid #fff; background: linear-gradient(90deg, #1c9e4a 60%, #222 60%); text-align: center; font-size: 7px; }
.batt + svg { margin-right: -2px; }
.ime { font-size: 11px; }
.pin { background: #fff; color: #333; width: 10px; height: 10px; line-height: 10px; text-align: center; margin: 0 8px 0 6px; }
.tray time { text-align: center; }
.tray .note { margin-left: 9px; }

.menu { position: absolute; z-index: 2; list-style: none; display: flex; flex-direction: column; background: linear-gradient(90deg, #f1f1f1 16px, #fff 16px); border: 1px solid #ccc; }
.window-menu { left: 378px; top: 28px; width: 114px; height: 219px; }
.docker-menu { left: 492px; top: 110px; width: 139px; height: 428px; }
.menu li { flex: 1; display: flex; position: relative; min-height: 0; }
.menu button { flex: 1; padding: 0 10px 0 18px; justify-content: flex-start; position: relative; }
.menu span { flex: 1; text-align: left; }
.menu button svg { position: absolute; left: 2px; }
.menu button:disabled { color: #aaa; }
.menu .pale { opacity: 0.35; }
.menu .line { flex: 0 0 4px; margin-left: 17px; background: linear-gradient(#ddd, #ddd) 0 1px / 100% 1px no-repeat; }
.menu .hot { background: #dceaf7; box-shadow: inset 0 0 0 1px #a5cdea; }
.sub::after { content: ""; position: absolute; right: 1px; top: 4px; border: 3px solid transparent; border-left: 3px solid #111; border-right: 0; }
.ck::before, .radio::before { content: ""; position: absolute; left: 0; top: 0; bottom: 0; width: 12px; background: #90c8f6; }
.ck::after { content: ""; position: absolute; left: 2px; top: 3px; width: 8px; height: 5px; border: solid #1d5287; border-width: 0 0 1px 1px; transform: rotate(-45deg); }
.radio::after { content: ""; position: absolute; left: 3px; top: 4px; width: 6px; height: 6px; border-radius: 50%; background: #1d5287; }
.dot { position: absolute; left: 8px; top: 4px; width: 5px; height: 5px; border-radius: 50%; }
.green { background: #3c9d45; }
.red { background: #e2442f; }

.brand { position: absolute; z-index: 3; left: 766px; top: 450px; width: 190px; height: 90px; font-family: "Liberation Sans", "Noto Sans CJK SC", sans-serif; font-weight: 700; pointer-events: none; }
.outlined { fill: rgba(255, 255, 255, 0.9); stroke: #c8c8c8; stroke-width: 1px; }
.b1 { font-size: 40px; }
.b2 { font-size: 24px; fill: #fff; stroke: #c0c0c0; stroke-width: 1px; }
.b3 { font-size: 31px; }
.b4 { font-size: 22px; font-weight: 400; fill: rgba(255, 255, 255, 0.85); stroke: rgba(190, 190, 190, 0.5); stroke-width: 1px; paint-order: stroke; }

.gadget { position: absolute; z-index: 3; right: 11px; top: 414px; width: 78px; height: 40px; display: flex; align-items: center; }
.net { margin-left: 32px; flex: 1; height: 28px; background: #30323d; border-radius: 0 14px 14px 0; display: flex; flex-direction: column; justify-content: center; padding: 0 5px 0 9px; color: #fff; }
.net span { display: flex; line-height: 14px; justify-content: flex-end; font-weight: 700; }
.net i { margin-right: auto; font-style: normal; font-size: 7px; }
.net small { font-size: 7px; color: #888; font-weight: 400; }
.net .up { color: #4eb1f5; }
.net .down { color: #33b540; }
.dial { position: absolute; left: 0; top: 0; }
.dial svg { width: 40px; height: 40px; fill: none; stroke-width: 1.500px; }
.dial strong { position: absolute; inset: 0; line-height: 40px; text-align: center; font-size: 16px; font-weight: 300; color: #e6e6e6; font-family: Roboto, sans-serif; }
.dial small { font-size: 8px; }
```
FILE: palette.js
```js
const colors = ["#211711", "#3c372f", "#555555", "#66686c", "#8a8783", "#a0a0a0", "#b5b5b5", "#c9c4c1", "#dadada", "#ececec", "#ffffff",
  "#1e2382", "#00a0e9", "#0a9a3c", "#fff100", "#e60012", "#e4007f", "#ad3b84", "#f08300", "#f9b0b8", "#857264", "#cfcbe3", "#a39bca",
  "#6b8cc6", "#7766ac", "#8b85a8", "#4f6191", "#564c6c", "#748799", "#0080d6", "#a0daf8", "#b3c9d8", "#98a9b3", "#707c85"];
const box = document.getElementById("swatches");
for (const c of colors) {
  const s = document.createElement("i");
  s.style.background = c;
  box.append(s);
}
```
